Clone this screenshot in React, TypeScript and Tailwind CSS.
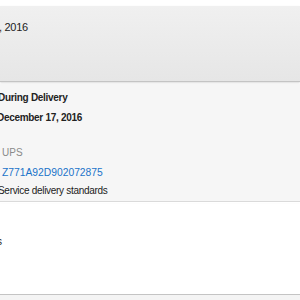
export default function App() {
  const font = { fontFamily: '"Liberation Sans", Arial, sans-serif' };
  return (
    <main className="h-[300px] w-[300px] overflow-hidden bg-white text-[#222]" style={font}>
      <div className="h-[6px] bg-white" />
      <section className="h-[76px] border-b border-[#c4c4c4] bg-gradient-to-b from-[#f0f0f0] to-[#e6e6e6] pt-[13px] shadow-[0_1px_2px_rgba(0,0,0,0.15)]">
        <p className="ml-[-1px] text-[11px] leading-[16px] tracking-[-0.3px]">, 2016</p>
      </section>
      <section className="mt-[2px] h-[118px] border-b border-[#dadada] bg-[#f6f6f6] pt-[6px]">
        <p className="ml-[-2px] text-[10px] font-bold leading-[16px] tracking-[-0.3px]">During Delivery</p>
        <p className="ml-[-3px] mt-[4px] text-[10px] font-bold leading-[16px] tracking-[-0.3px]">December 17, 2016</p>
        <p className="ml-[2px] mt-[19px] text-[10px] leading-[16px] text-[#8a8a8a]">UPS</p>
        <p className="ml-[2px] mt-[4px] text-[10.3px] leading-[16px] text-[#1a73c9]">Z771A92D902072875</p>
        <p className="ml-[-2px] mt-[2px] text-[10px] leading-[16px] tracking-[-0.3px]">Service delivery standards</p>
      </section>
      <section className="mt-[2px] h-[91px] border-b border-[#c4c4c4] bg-white pt-[30px] shadow-[0_1px_2px_rgba(0,0,0,0.15)]">
        <p className="ml-[-3px] text-[10px] leading-[16px]">s</p>
      </section>
      <div className="h-[6px] bg-[#f4f4f4]" />
    </main>
  );
}
